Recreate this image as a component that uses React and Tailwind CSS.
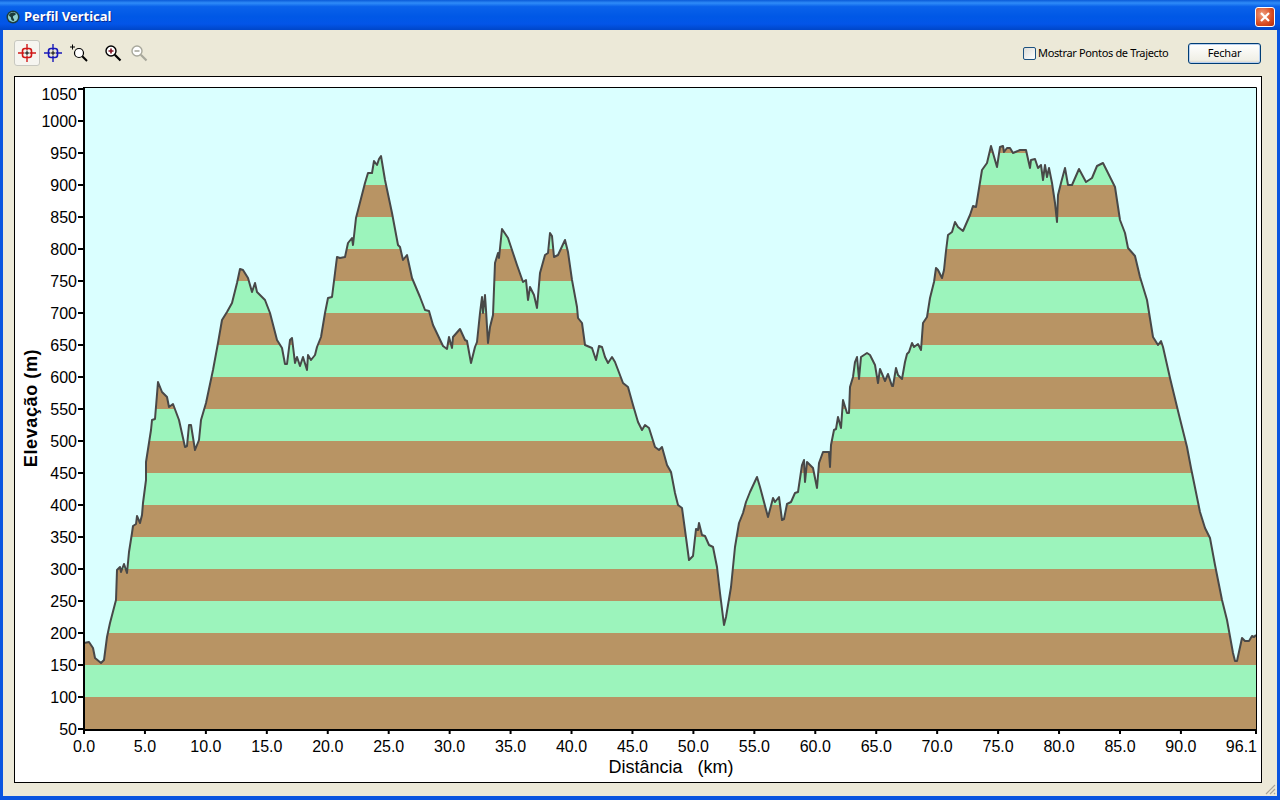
const perfil = `84,643 89,642 93,648 95,658 101,663 104,660 107,637 110,623 116,600 117,570 120,567 121,572 124,564 127,573 129,552 132,533 133,526 136,524 137,516 140,523 142,515 143,503 146,480 146,462 151,430 152,420 155,419 158,382 162,392 167,397 169,407 173,404 179,420 185,447 187,446 189,425 191,425 195,450 199,440 201,420 206,403 213,370 218,343 222,320 227,312 232,303 237,283 240,269 243,270 248,278 252,292 255,283 257,292 265,300 270,313 277,340 282,348 285,364 287,364 290,340 292,338 295,363 297,357 300,366 303,357 307,370 308,355 311,360 315,355 317,347 321,337 325,313 328,298 332,297 337,257 340,258 345,257 348,243 352,238 353,245 356,218 365,183 368,173 372,173 374,161 377,165 379,159 381,156 385,180 392,213 398,245 400,247 403,260 407,255 412,278 420,297 425,310 429,311 433,325 443,346 447,349 449,337 452,348 453,337 460,329 465,340 467,341 471,363 475,347 477,342 480,313 482,297 483,313 485,295 486,310 488,343 490,327 493,315 495,263 498,253 499,258 502,229 508,238 513,253 517,265 523,282 526,280 528,300 530,287 534,295 537,308 540,273 545,255 548,253 550,233 552,236 554,257 558,255 565,240 568,252 572,280 577,307 578,318 582,323 585,345 592,348 596,360 599,346 602,347 605,357 608,363 612,357 615,362 623,383 628,387 633,405 638,422 642,430 645,425 649,428 655,447 659,450 662,447 667,465 671,472 675,493 678,505 682,508 685,530 689,560 693,556 696,529 698,530 699,523 702,535 705,536 709,545 713,547 717,567 720,593 724,625 726,617 731,587 735,547 739,523 743,513 746,502 750,492 757,477 760,487 768,517 772,502 773,498 775,502 779,497 782,520 784,519 787,504 791,502 795,493 798,492 802,465 804,460 805,482 807,462 813,468 817,488 819,463 823,452 829,452 830,467 831,445 834,430 836,429 838,417 841,428 843,400 847,413 849,413 850,387 853,377 855,362 857,357 859,379 861,357 867,353 870,355 875,365 878,383 880,369 885,381 888,374 892,386 893,386 896,368 898,375 902,379 905,362 907,354 909,352 912,343 914,347 918,344 921,350 923,323 927,317 930,298 934,282 936,268 938,270 942,278 944,270 946,251 948,235 952,232 955,222 958,227 963,231 970,215 973,206 976,207 982,170 987,163 991,146 993,153 997,167 1000,147 1003,146 1004,152 1007,148 1010,148 1013,153 1020,150 1026,150 1030,168 1031,160 1035,159 1038,168 1041,165 1043,180 1045,165 1047,177 1049,168 1052,183 1055,203 1057,222 1058,195 1061,183 1065,168 1068,185 1072,185 1079,169 1086,182 1092,178 1097,166 1103,163 1108,173 1115,187 1120,220 1125,233 1128,248 1135,256 1140,277 1147,300 1153,337 1158,345 1161,341 1163,347 1170,378 1179,415 1187,447 1191,468 1200,512 1205,528 1210,538 1215,565 1222,600 1227,620 1233,653 1235,661 1237,661 1242,638 1245,641 1249,641 1252,636 1254,637 1256,635`

const elevacoes = [1050, 1000, 950, 900, 850, 800, 750, 700, 650, 600, 550, 500, 450, 400, 350, 300, 250, 200, 150, 100, 50]
const distancias = ['0.0', '5.0', '10.0', '15.0', '20.0', '25.0', '30.0', '35.0', '40.0', '45.0', '50.0', '55.0', '60.0', '65.0', '70.0', '75.0', '80.0', '85.0', '90.0']

function yDe(e) {
  return 729 - ((e - 50) / 50) * 32
}

function Grafico() {
  const faixas = elevacoes.slice(1)
  return (
    <svg viewBox="15 77 1246 705" className="block w-[1246px] h-[705px] font-['Liberation_Sans',sans-serif]">
      <defs>
        <clipPath id="terreno">
          <polygon points={`${perfil} 1256,729 84,729`} />
        </clipPath>
      </defs>
      <rect x="84" y="88" width="1172" height="641" fill="#daffff" />
      <g clipPath="url(#terreno)">
        {faixas.map((e, i) => (
          <rect key={e} x="84" y={yDe(e) - 32} width="1172" height="32" fill={i % 2 === 0 ? '#9cf4bc' : '#b89464'} />
        ))}
      </g>
      <polyline points={perfil} fill="none" stroke="#484848" strokeWidth="2" strokeLinejoin="round" />
      <path d="M84 87.5H1256.5V730" fill="none" stroke="#000" strokeWidth="1" />
      <path d="M84 87V731M83 730H1257" fill="none" stroke="#000" strokeWidth="2" />
      {elevacoes.map(e => (
        <g key={e}>
          <rect x="78" y={yDe(e) - 1} width="6" height="2" fill="#000" />
          {/* o primeiro rotulo fica encostado ao topo */}
          <text x="77" y={e === 1050 ? 100 : yDe(e) + 6} textAnchor="end" fontSize="16" fill="#000">{e}</text>
        </g>
      ))}
      {distancias.map((d, i) => {
        const x = 84 + i * 60.94
        return (
          <g key={d}>
            <rect x={x - 1} y="730" width="2" height="4" fill="#000" />
            <text x={x} y="752" textAnchor="middle" fontSize="16" fill="#000">{d}</text>
          </g>
        )
      })}
      <rect x="1255" y="730" width="2" height="4" fill="#000" />
      <text x="1257" y="752" textAnchor="end" fontSize="16" fill="#000">96.1</text>
      <text x="671" y="773" textAnchor="middle" fontSize="18" fill="#000" xmlSpace="preserve">Distância   (km)</text>
      <text transform="translate(37 408) rotate(-90)" textAnchor="middle" fontSize="18" fontWeight="700" fill="#000" letterSpacing="0.6">Elevação (m)</text>
    </svg>
  )
}

function Mira({ cor }) {
  return (
    <svg width="18" height="18" viewBox="0 0 18 18" fill="none">
      <rect x="4.5" y="4.5" width="9" height="9" rx="2.5" stroke={cor} strokeWidth="1.6" />
      <path d="M9 0v6M9 12v6M0 9h6M12 9h6" stroke={cor} strokeWidth="1.4" />
      <path d="M9 6.5v5M6.5 9h5" stroke="#000" strokeWidth="1" />
    </svg>
  )
}

function Lupa({ cor, sinal, corSinal }) {
  return (
    <svg width="18" height="18" viewBox="0 0 18 18" fill="none">
      <circle cx="7" cy="7" r="5" stroke={cor} strokeWidth="1.4" fill="#fff" />
      <path d="M10.8 10.8L16.5 16.5" stroke={cor} strokeWidth="2.2" />
      <path d={sinal} stroke={corSinal} strokeWidth="1.6" />
    </svg>
  )
}

function App() {
  return (
    <div className="w-[1280px] h-[800px] flex flex-col overflow-hidden bg-[#0a55e0] font-['Noto_Sans',sans-serif]">
      <div className="h-[30px] shrink-0 flex items-center justify-between pl-[6px] pr-[5px] pt-[4px] bg-[linear-gradient(180deg,#0a5ad8_0%,#2f8cf8_10%,#0a62ea_22%,#0058e6_55%,#0355e8_80%,#0046c8_100%)]">
        <div className="flex items-center gap-[4px]">
          <svg width="14" height="14" viewBox="0 0 14 14">
            <circle cx="7" cy="7" r="6.5" fill="#1c3c3c" />
            <circle cx="7" cy="7" r="5" fill="#8fd0d0" />
            <path d="M3 5c2-3 5-3 7-1-1 2-3 1-3 3s2 2 1 4c-2 0-3-1-3-3S3 7 3 5z" fill="#1c3c3c" />
          </svg>
          <span className="text-[13px] font-bold text-white [text-shadow:1px_1px_0_#0a2a90]">Perfil Vertical</span>
        </div>
        <button className="w-[20px] h-[20px] flex items-center justify-center rounded-[3px] border border-white bg-[radial-gradient(circle_at_35%_35%,#f0a080,#d84a20_60%,#b02c10)]">
          <svg width="12" height="12" viewBox="0 0 12 12">
            <path d="M2 2l8 8M10 2l-8 8" stroke="#fff" strokeWidth="2.2" />
          </svg>
        </button>
      </div>

      <div className="flex-1 mx-[3px] mb-[4px] bg-[#ece9d8] flex flex-col relative">
        <div className="h-[46px] shrink-0 flex items-center justify-between pl-[11px] pr-[16px]">
          <div className="flex items-center mt-[-1px]">
            <div className="w-[26px] h-[26px] flex items-center justify-center rounded-[3px] border border-[#c8c8c0] bg-[#f6f5f0]">
              <Mira cor="#d01818" />
            </div>
            <div className="w-[26px] h-[26px] flex items-center justify-center">
              <Mira cor="#1818b8" />
            </div>
            <div className="w-[26px] h-[26px] flex items-center justify-center">
              <svg width="18" height="18" viewBox="0 0 18 18" fill="none">
                <circle cx="9" cy="9" r="4.5" stroke="#000" strokeWidth="1.2" fill="#fff" />
                <path d="M12.3 12.3L17 17" stroke="#000" strokeWidth="2" />
                <path d="M0 3h5M2.5 .5v5" stroke="#000" strokeWidth="1" />
              </svg>
            </div>
            <div className="w-[26px] h-[26px] ml-[8px] flex items-center justify-center">
              <Lupa cor="#000" corSinal="#801020" sinal="M4.5 7h5M7 4.5v5" />
            </div>
            <div className="w-[26px] h-[26px] flex items-center justify-center">
              <Lupa cor="#a8a89c" corSinal="#a8a89c" sinal="M4.5 7h5" />
            </div>
          </div>
          <div className="flex items-center">
            <span className="w-[13px] h-[13px] border border-[#1c5180] rounded-[2px] bg-[linear-gradient(135deg,#dcdcd7,#ffffff)]"></span>
            <span className="ml-[2px] w-[150px] text-[11px] tracking-[-0.35px] text-black">Mostrar Pontos de Trajecto</span>
            <button className="w-[73px] h-[21px] flex items-center justify-center rounded-[3px] border border-[#003c74] bg-[linear-gradient(180deg,#ffffff,#f0efe6_85%,#d6d0c5)] shadow-[inset_0_0_0_1px_#b8d0f0] text-[11px] tracking-[-0.2px] text-black">
              Fechar
            </button>
          </div>
        </div>

        <div className="ml-[11px] w-[1248px] h-[707px] border border-black bg-white">
          <Grafico />
        </div>

        <svg className="absolute right-[1px] bottom-[1px]" width="12" height="12" viewBox="0 0 12 12">
          <path d="M11 2L2 11M11 6L6 11M11 10L10 11" stroke="#a8a498" strokeWidth="1.2" />
        </svg>
      </div>
    </div>
  )
}

export default App
